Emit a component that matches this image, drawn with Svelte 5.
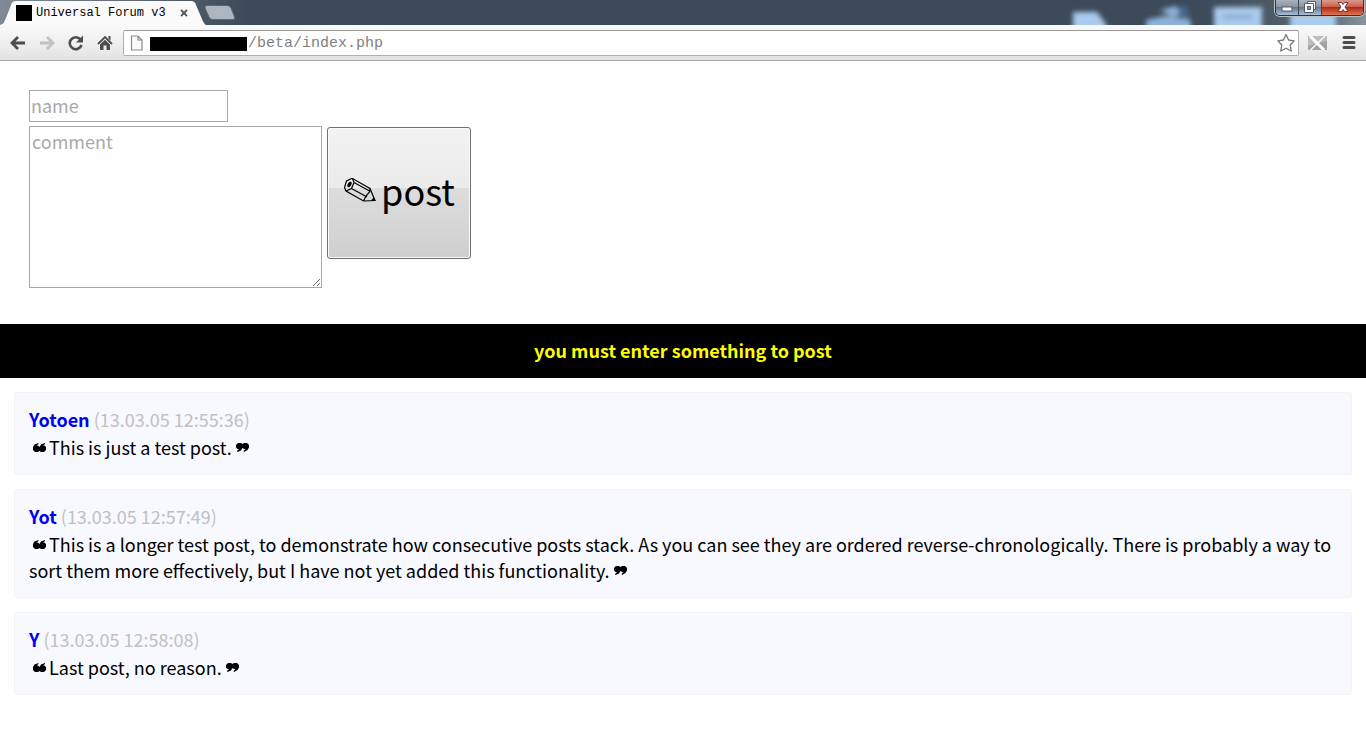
<script>

  let name = '';
  let comment = '';
  let url = '/beta/index.php';
  let warning = 'you must enter something to post';

  const posts = [
    { author: 'Yotoen', date: '13.03.05 12:55:36', text: 'This is just a test post.' },
    { author: 'Yot', date: '13.03.05 12:57:49', text: 'This is a longer test post, to demonstrate how consecutive posts stack. As you can see they are ordered reverse-chronologically. There is probably a way to sort them more effectively, but I have not yet added this functionality.' },
    { author: 'Y', date: '13.03.05 12:58:08', text: 'Last post, no reason.' },
  ];

  const submitPost = (event) => {
    event.preventDefault();
    warning = comment ? '' : 'you must enter something to post';
  };

</script>

<svelte:head>
  <title>Universal Forum v3</title>
</svelte:head>

<div class="browser">
  <div class="titlebar">
    <div class="tab">
      <svg class="tab-shape" width="206" height="25" viewBox="0 0 206 25">
        <path d="M0 25 C4 24 4 22 6 18 L11 5 C12 2 13 1 16 1 H191 C194 1 195 2 196 5 L202 19 C204 24 205 24 206 25 Z" fill="#fafafa" />
      </svg>
      <span class="favicon"></span>
      <span class="tab-title">Universal Forum v3</span>
      <button class="tab-close" aria-label="Close tab">
        <svg width="10" height="8" viewBox="0 0 10 8"><path d="M1 1 L7 7 M7 1 L1 7" stroke="#555" stroke-width="1.800" /></svg>
      </button>
    </div>
    <button class="new-tab" aria-label="New tab">
      <svg width="32" height="15" viewBox="0 0 32 15">
        <path d="M3 .5 H23 Q26 .5 27 3 L30.500 12 Q31 14.500 29 14.500 H9 Q6 14.500 5 12 L1 3 Q.5 .5 3 .5 Z" fill="#acb6c1" stroke="#5b6875" stroke-width="1" />
      </svg>
    </button>
    <svg class="glass" width="310" height="25" viewBox="0 0 310 25">
      <defs><filter id="soft" x="-20%" y="-50%" width="140%" height="200%"><feGaussianBlur stdDeviation="2.800" /></filter></defs>
      <g filter="url(#soft)" fill="#a9cbee">
        <path d="M17 12 H41 L50 24 V32 H17 Z" />
        <path d="M104 10 L120 6 L132 13 L116 17 Z M90 20 L108 16 L134 19 L136 32 H90 Z" fill="#8db2d8" />
        <path d="M120 7 L130 6 L134 16 L124 15 Z" fill="#426b92" />
        <path d="M158 7 H206 V32 H158 Z" />
        <path d="M167 15 H196 V19 H167 Z" fill="#86a7cb" />
        <path d="M234 11 H280 V32 H234 Z" />
      </g>
    </svg>
    <div class="window-buttons">
      <button class="minimize" aria-label="Minimize">
        <svg width="12" height="6" viewBox="0 0 12 6"><rect x="1" y="1" width="10" height="4" fill="#fff" stroke="#555b66" /></svg>
      </button>
      <button class="restore" aria-label="Restore">
        <svg width="12" height="12" viewBox="0 0 12 12">
          <path d="M3.500 .5 H11.500 V8.500 H3.500 Z" fill="#fff" stroke="#555b66" />
          <path d="M.5 2.500 H9.500 V11.500 H.5 Z" fill="#fff" stroke="#555b66" />
          <path d="M3.500 5.500 H6.500 V8.500 H3.500 Z" fill="#8da0b5" stroke="#555b66" />
        </svg>
      </button>
      <button class="close" aria-label="Close">
        <svg width="12" height="10" viewBox="0 0 12 10">
          <path d="M1 .5 H4.500 L6 2.500 L7.500 .5 H11 L8 5 L11 9.500 H7.500 L6 7.500 L4.500 9.500 H1 L4 5 Z" fill="#fff" stroke="#5c4448" />
        </svg>
      </button>
    </div>
  </div>

  <div class="toolbar">
    <button aria-label="Back">
      <svg width="18" height="16" viewBox="0 0 18 16"><path d="M16 8 H3 M9 2 L3 8 L9 14" fill="none" stroke="#4d4d4d" stroke-width="2.800" /></svg>
    </button>
    <button aria-label="Forward">
      <svg width="18" height="16" viewBox="0 0 18 16"><path d="M2 8 H15 M9 2 L15 8 L9 14" fill="none" stroke="#c2c2c2" stroke-width="2.800" /></svg>
    </button>
    <button aria-label="Reload">
      <svg width="18" height="16" viewBox="0 0 18 16">
        <path d="M13.500 4.500 A6 6 0 1 0 14.500 10" fill="none" stroke="#4d4d4d" stroke-width="2.600" />
        <path d="M16 .5 V7.500 H9 Z" fill="#4d4d4d" />
      </svg>
    </button>
    <button class="home" aria-label="Home">
      <svg width="18" height="16" viewBox="0 0 18 16">
        <path d="M2 9 L9 2 L16 9" fill="none" stroke="#4d4d4d" stroke-width="1.800" />
        <path d="M4 9.500 L9 4.700 L14 9.500 V15 H10.500 V10.500 H7.500 V15 H4 Z M12.500 1 H14.500 V5.500 L12.500 3.700 Z" fill="#4d4d4d" />
      </svg>
    </button>
    <div class="omnibox">
      <svg width="13" height="16" viewBox="0 0 13 16">
        <path d="M1.500 1 H8 L12 5 V15 H1.500 Z M8 1 V5 H12" fill="#fafafa" stroke="#8a8a8a" stroke-width="1.200" />
      </svg>
      <span class="host"></span>
      <input class="url" aria-label="Address" bind:value={url} />
      <button class="star" aria-label="Bookmark this page">
        <svg width="20" height="20" viewBox="0 0 20 20">
          <path d="M10 1.500 L12.600 7 L18.200 7.800 L14.200 12 L15.300 18 L10 15.200 L4.700 18 L5.800 12 L1.800 7.800 L7.400 7 Z" fill="#fff" stroke="#777" stroke-width="1.300" stroke-linejoin="round" />
        </svg>
      </button>
    </div>
    <button class="extension" aria-label="Extension">
      <svg width="19" height="14" viewBox="0 0 19 14">
        <rect width="19" height="14" fill="#bcbcbc" />
        <path d="M0 14 V10 L19 5 V14 Z" fill="#a2a2a2" />
        <path d="M2 0 L16 14" stroke="#fff" stroke-width="3" />
        <path d="M17 0 L2.500 14" stroke="#fff" stroke-width="1.300" />
      </svg>
    </button>
    <button class="menu" aria-label="Menu">
      <svg width="14" height="13" viewBox="0 0 14 13"><path d="M2 1.500 H12 M2 6.500 H12 M2 11.500 H12" stroke="#4d4d4d" stroke-width="3" stroke-linecap="round" /></svg>
    </button>
  </div>
</div>

<form on:submit={submitPost}>
  <input class="name" type="text" placeholder="name" aria-label="name" bind:value={name} />
  <div class="row">
    <textarea placeholder="comment" aria-label="comment" bind:value={comment}></textarea>
    <button class="post-button" type="submit">
      <svg width="34" height="26" viewBox="0 0 34 26">
        <path d="M8.500 1.500 L3.500 4 L1.500 10.500 L3 14 L20.500 24 L32 23.500 L27 11.500 L9.500 1.500 Z" fill="none" stroke="#000" stroke-width="1.200" />
        <path d="M9.500 1.500 L11 5.500 L8.500 11.500 L3 14 M11 5.500 L27.500 14.500 M8.500 11.500 L24 20 M27 11.500 L26.500 15 L23 19 L20.500 24" fill="none" stroke="#000" stroke-width="1.200" />
        <ellipse cx="6.500" cy="7.500" rx="1.800" ry="3" transform="rotate(28 6.500 7.500)" />
        <path d="M32.500 24 L28 23.800 L30.500 20.500 Z" />
      </svg>
      <span>post</span>
    </button>
  </div>
</form>

{#if warning}
  <div class="warning" role="alert">{warning}</div>
{/if}

<main>
  {#each posts as post}
    <article>
      <header><strong>{post.author}</strong> <time>({post.date})</time></header>
      <p>
        <svg class="open" width="13" height="9" viewBox="0 0 13 9">
          <path d="M5.500 0 V1 L3.500 2.500 H5 L6.500 4 L8 1.500 L12 0 V1 L10 2.500 H11.500 L13 4 V7 L11 9 H8 L6.500 8 L5 9 H2 L0 7 V4 L1.500 1.500 Z" />
        </svg>{post.text}
        <svg class="shut" width="13" height="9" viewBox="0 0 13 9">
          <path d="M2 0 H5 L6.500 1 L8 0 H11 L13 2 V4.500 L11.500 7 L8 9 L7.500 8 L9.500 6 H8 L6.500 5 L5 7.500 L1.500 9 L1 8 L3 6 H1.500 L0 4.500 V2 Z" />
        </svg>
      </p>
    </article>
  {/each}
</main>

<style>
  :global(body) {
    background: #fff;
    font-family: "Noto Sans CJK JP", "Noto Sans CJK SC", sans-serif;
    font-size: 18px;
    line-height: 26px;
    color: #000;
  }

  input, textarea, button {
    font-family: inherit;
    margin: 0;
    box-sizing: border-box;
  }

  svg {
    display: block;
    flex: none;
  }

  .titlebar {
    position: relative;
    display: flex;
    height: 25px;
    background: linear-gradient(90deg, #818a94 0, #3c4a59 250px, #3c4a59 88%, #5b6670 97%, #8b949c 100%);
  }

  .titlebar button, .toolbar button {
    display: flex;
    align-items: center;
    justify-content: center;
    padding: 0;
    border: 0;
    background: none;
  }

  .tab {
    position: relative;
    display: flex;
    align-items: center;
    width: 204px;
    padding: 1px 14px 0 16px;
    box-sizing: border-box;
  }

  .tab-shape {
    position: absolute;
    left: 0;
    top: 0;
  }

  .favicon {
    position: relative;
    width: 16px;
    height: 16px;
    background: #000;
  }

  .tab-title {
    position: relative;
    flex: 1;
    padding-left: 4px;
    font: 12px/16px "Liberation Mono", monospace;
    white-space: nowrap;
  }

  .tab-close {
    position: relative;
  }

  .new-tab {
    align-self: center;
  }

  .glass {
    margin-left: auto;
  }

  .window-buttons {
    position: absolute;
    top: 0;
    right: 2px;
    display: flex;
    height: 15px;
    overflow: hidden;
    border: 1px solid #2b333c;
    border-top: 0;
    border-radius: 0 0 5px 5px;
    box-shadow: 0 0 0 1px #b9c2cb;
  }

  .window-buttons button {
    width: 23px;
    padding-bottom: 2px;
    background: linear-gradient(#a9b2bd 0, #8b96a3 45%, #66788c 50%, #a9bfd8 100%);
    border-right: 1px solid #3c4652;
  }

  .window-buttons .minimize {
    padding: 3px 0 0;
  }

  .window-buttons .close {
    width: 41px;
    border-right: 0;
    background: linear-gradient(#dd9a8b 0, #cc5f4b 45%, #b02a15 50%, #dd7450 100%);
  }

  .toolbar {
    display: flex;
    align-items: center;
    height: 36px;
    padding: 0 8px 0 9px;
    box-sizing: border-box;
    background: linear-gradient(#fafafa, #e3e3e3);
    border-bottom: 1px solid #a9a9a9;
  }

  .toolbar > button {
    margin-right: 11px;
  }

  .toolbar > .home {
    margin-right: 9px;
  }

  .omnibox {
    flex: 1;
    display: flex;
    align-items: center;
    height: 26px;
    margin-right: 9px;
    padding: 0 2px 0 6px;
    box-sizing: border-box;
    border: 1px solid #b0b0b0;
    border-top-color: #999;
    border-radius: 2px;
    background: #fff;
  }

  .host {
    width: 97px;
    height: 14px;
    margin: 2px 0 0 7px;
    background: #000;
  }

  .url {
    flex: 1;
    min-width: 0;
    padding: 2px 1px 0;
    border: 0;
    outline: 0;
    background: none;
    color: #808080;
    font: 15px/20px "Liberation Mono", monospace;
  }

  .toolbar > .extension {
    margin-right: 15px;
  }

  .toolbar > .menu {
    margin-right: 2px;
  }

  form {
    padding: 29px 29px 36px;
  }

  .name {
    display: block;
    width: 199px;
    height: 32px;
    margin-bottom: 4px;
    padding: 0 1px 2px;
  }

  .name, textarea {
    border: 1px solid #a9a9a9;
    background: #fff;
    outline: 0;
    font-size: 18px;
    line-height: 26px;
  }

  ::placeholder {
    color: #a9a9a9;
    opacity: 1;
  }

  .row {
    display: flex;
    align-items: flex-start;
    gap: 5px;
  }

  textarea {
    width: 293px;
    height: 162px;
    padding: 1px 2px 2px;
  }

  .post-button {
    display: flex;
    align-items: center;
    justify-content: center;
    gap: 4px;
    width: 144px;
    height: 132px;
    margin-top: 1px;
    padding: 0 0 6px;
    border: 1px solid #707070;
    border-radius: 3px;
    box-shadow: inset 0 0 0 1px #fafafa;
    background: linear-gradient(#f2f2f2 0, #ebebeb 46%, #dddddd 46%, #cfcfcf 100%);
    color: #000;
    font-size: 36px;
    line-height: 52px;
  }

  .warning {
    padding: 13px 14px 15px;
    background: #000;
    color: #ff0;
    font-weight: bold;
    text-align: center;
  }

  main {
    padding: 14px;
  }

  article {
    margin-bottom: 14px;
    padding: 13px 14px 14px;
    border: 1px solid #f3f3f3;
    border-radius: 3px;
    background: #f8f8ff;
  }

  strong {
    color: #0000ee;
  }

  time {
    color: #c0c0c0;
  }

  p {
    margin: 2px 0 0;
  }

  p svg {
    display: inline-block;
    vertical-align: 3px;
  }

  .open {
    margin: 0 3px 0 4px;
  }
</style>
